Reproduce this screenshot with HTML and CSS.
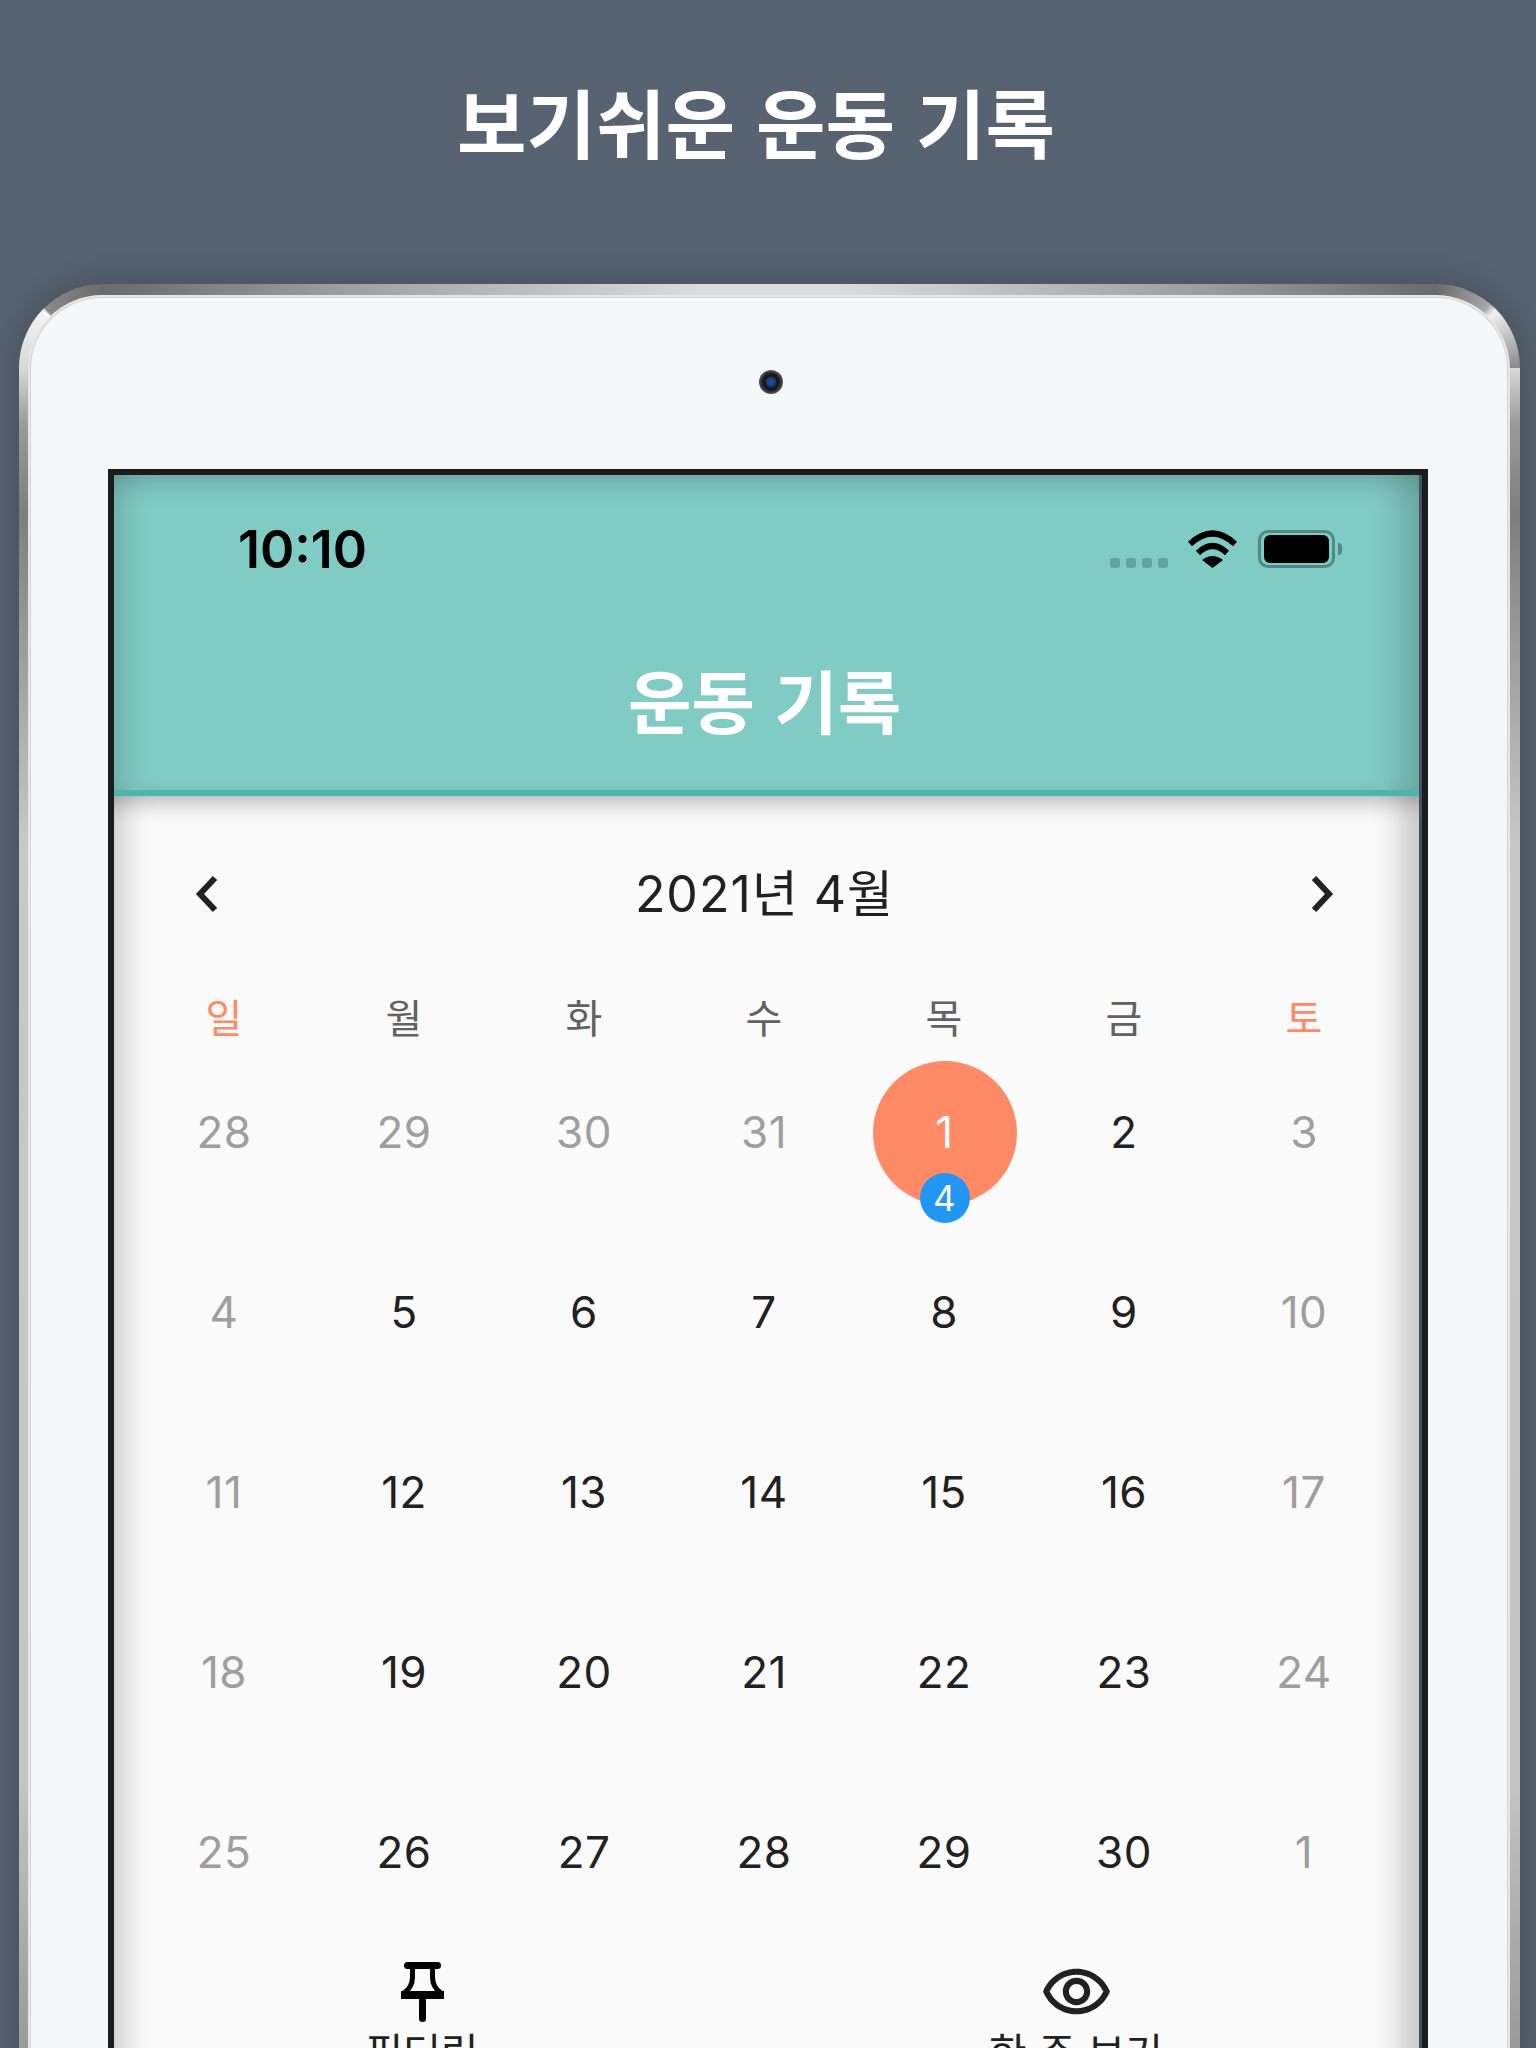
FILE: index.html
```html
<!DOCTYPE html>
<html lang="ko">
<head>
    <meta charset="utf-8">
    <title>보기쉬운 운동 기록</title>
    <link rel="stylesheet" href="styles.css">
</head>
<body>
    <div class="page">
        <h1 class="headline">보기쉬운 운동 기록</h1>
        <div class="device">
            <div class="face">
                <div class="camera"></div>
                <div class="screen">
                    <div class="app">
                        <header class="app-header">
                            <div class="status">
                                <span class="time">10:10</span>
                                <div class="status-icons">
                                    <div class="signal"><i></i><i></i><i></i><i></i></div>
                                    <svg class="wifi" width="51" height="38" viewBox="0 0 51 38">
                                        <path d="M3 14 Q25.5 -7 48 14" fill="none" stroke="#000" stroke-width="6"/>
                                        <path d="M11 23 Q25.5 9 40 23" fill="none" stroke="#000" stroke-width="6"/>
                                        <path d="M25.5 38 L15 30 Q25.5 22 36 30 Z" fill="#000"/>
                                    </svg>
                                    <div class="battery"><div class="battery-fill"></div></div>
                                    <div class="battery-nub"></div>
                                </div>
                            </div>
                            <div class="app-title">운동 기록</div>
                        </header>
                        <main class="calendar">
                            <div class="month-nav">
                                <svg width="24" height="38" viewBox="0 0 24 38">
                                    <polyline points="20,3 5,19 20,35" fill="none" stroke="#212121" stroke-width="6"/>
                                </svg>
                                <span class="month">2021년 4월</span>
                                <svg width="24" height="38" viewBox="0 0 24 38">
                                    <polyline points="4,3 19,19 4,35" fill="none" stroke="#212121" stroke-width="6"/>
                                </svg>
                            </div>
                            <div class="weekdays">
                                <span class="accent">일</span><span>월</span><span>화</span><span>수</span><span>목</span><span>금</span><span class="accent">토</span>
                            </div>
                            <div class="days">
                                <div class="day muted">28</div><div class="day muted">29</div><div class="day muted">30</div><div class="day muted">31</div>
                                <div class="day"><div class="today">1<span class="badge">4</span></div></div>
                                <div class="day">2</div><div class="day muted">3</div>

                                <div class="day muted">4</div><div class="day">5</div><div class="day">6</div><div class="day">7</div><div class="day">8</div><div class="day">9</div><div class="day muted">10</div>
                                <div class="day muted">11</div><div class="day">12</div><div class="day">13</div><div class="day">14</div><div class="day">15</div><div class="day">16</div><div class="day muted">17</div>
                                <div class="day muted">18</div><div class="day">19</div><div class="day">20</div><div class="day">21</div><div class="day">22</div><div class="day">23</div><div class="day muted">24</div>
                                <div class="day muted">25</div><div class="day">26</div><div class="day">27</div><div class="day">28</div><div class="day">29</div><div class="day">30</div><div class="day muted">1</div>
                            </div>
                            <div class="tabs">
                                <div class="tab">
                                    <div class="tab-icon">
                                        <svg width="43" height="60" viewBox="0 0 43 60">
                                            <rect x="3" y="0" width="37" height="7" rx="3.5" fill="#000"/>
                                            <path d="M11.5 6 V15 C11.5 22 9 27 3 31 M31.5 6 V15 C31.5 22 34 27 40 31" fill="none" stroke="#000" stroke-width="5"/>
                                            <rect x="0" y="29" width="43" height="8" fill="#000"/>
                                            <rect x="18" y="35" width="7" height="25" rx="3.5" fill="#000"/>
                                        </svg>
                                    </div>
                                    <span class="tab-label">필터링</span>
                                </div>
                                <div class="tab">
                                    <div class="tab-icon">
                                        <svg width="73" height="73" viewBox="0 0 24 24">
                                            <path fill="#212121" d="M12 6.5c3.79 0 7.17 2.13 8.82 5.5-1.65 3.37-5.02 5.5-8.82 5.5S4.83 15.37 3.18 12C4.83 8.63 8.21 6.5 12 6.5m0-2C7 4.5 2.73 7.61 1 12c1.73 4.39 6 7.5 11 7.5s9.27-3.11 11-7.5c-1.73-4.39-6-7.5-11-7.5zm0 5c1.38 0 2.5 1.12 2.5 2.5s-1.12 2.5-2.5 2.5-2.5-1.12-2.5-2.5 1.12-2.5 2.5-2.5m0-2c-2.48 0-4.5 2.02-4.5 4.5s2.02 4.5 4.5 4.5 4.5-2.02 4.5-4.5-2.02-4.5-4.5-4.5z"/>
                                        </svg>
                                    </div>
                                    <span class="tab-label">한 주 보기</span>
                                </div>
                            </div>
                        </main>
                    </div>
                </div>
            </div>
        </div>
    </div>
</body>
</html>
```

FILE: styles.css
```css
html, body {
    margin: 0;
    padding: 0;
}
body {
    background-color: #576371;
    font-family: Inter, "Noto Sans CJK KR", sans-serif;
}
.page {
    height: 2048px;
    overflow: hidden;
}
.headline {
    height: 284px;
    margin: 0;
    padding-top: 70px;
    padding-right: 24px;
    box-sizing: border-box;
    color: #fff;
    font-family: "Noto Sans CJK KR", sans-serif;
    font-size: 75.5px;
    font-weight: 700;
    line-height: 100px;
    text-align: center;
}

/* tablet shell */
.device {
    margin-left: 19px;
    width: 1501px;
    height: 1800px;
    padding: 13px 12px 0 11px;
    box-sizing: border-box;
    border-radius: 84px 84px 0 0;
    box-shadow: 0 0 40px rgba(0, 0, 0, 0.22);
    background-color: #999;
    background-image:
        conic-gradient(from 270deg at 100% 100%, #d8d8d8 0deg, #f2f2f2 42deg, #fff 44deg, #8a8a8a 46deg, #6a6a6a 90deg),
        conic-gradient(from 0deg at 0% 100%, #6a6a6a 0deg, #a8a8a8 40deg, #d8d8d8 44deg, #f0f0f0 46deg, #8a8a8a 90deg),
        linear-gradient(to right, #6a6a6a 84px, #a0a0a0 330px, #dcdcdc 680px, #dcdcdc 820px, #a0a0a0 1170px, #6a6a6a 1417px),
        linear-gradient(to bottom, #d8d8d8 84px, #9a9a9a 140px, #7e7e7e 230px, #c8c8c8 560px, #c4c4c4 1500px, #9a9a9a 1760px);
    background-size: 84px 84px, 84px 84px, 100% 14px, 100% 100%;
    background-position: left top, right top, left top, left top;
    background-repeat: no-repeat;
}
.face {
    height: 100%;
    box-sizing: border-box;
    display: flex;
    flex-direction: column;
    border: 1px solid #d4d4d4;
    border-bottom: none;
    border-radius: 72px 72px 0 0;
    background-color: #f5f6f8;
    box-shadow: 0 0 0 2px #e6e6e6;
}
.camera {
    width: 24px;
    height: 24px;
    margin: 72px 0 75px 728px;
    border-radius: 50%;
    background: radial-gradient(circle, #1f4fa8 0, #1a3f86 4px, #15171b 6px, #1a1a1a 8px, #55585c 12px);
}
.screen {
    width: 1320px;
    margin-left: 77px;
    flex: 1;
    box-sizing: border-box;
    border: 6px solid #1c1c1c;
    border-bottom: none;
    background-color: #44525f;
}

.app {
    width: 1305px;
    height: 100%;
}
.app-header {
    height: 321px;
    box-sizing: border-box;
    border-bottom: 6px solid #4db6ac;
    background-color: #80cbc4;
    box-shadow: inset 0 22px 24px -14px rgba(0, 0, 0, 0.16), inset 30px 0 30px -20px rgba(0, 0, 0, 0.14), inset -40px 0 30px -20px rgba(0, 0, 0, 0.16);
}
.status {
    height: 148px;
    display: flex;
    align-items: center;
    justify-content: space-between;
    padding-left: 124px;
    padding-right: 77px;
}
.time {
    color: #000;
    font-size: 52px;
    font-weight: 600;
}
.status-icons {
    display: flex;
    align-items: flex-start;
    height: 38px;
    margin-top: 0;
}
.signal {
    display: flex;
    gap: 6px;
    margin-top: 28px;
    margin-right: 19px;
}
.signal i {
    display: block;
    width: 10px;
    height: 10px;
    border-radius: 3px;
    background-color: #63a39d;
}
.wifi {
    margin-right: 20px;
}
.battery {
    width: 77px;
    height: 38px;
    padding: 3px;
    box-sizing: border-box;
    border: 3px solid #4f8a85;
    border-radius: 10px;
}
.battery-fill {
    height: 100%;
    margin: -1px 0;
    padding: 1px 0;
    border-radius: 6px;
    background-color: #000;
}
.battery-nub {
    width: 4px;
    height: 12px;
    margin: 13px 0 0 3px;
    border-radius: 0 6px 6px 0;
    background-color: #4f8a85;
}
.app-title {
    padding-right: 4px;
    color: #fff;
    font-family: "Noto Sans CJK KR", sans-serif;
    font-size: 69px;
    font-weight: 700;
    line-height: 100px;
    text-align: center;
    margin-top: 26px;
}

/* calendar */
.calendar {
    height: 1260px;
    background-color: #fafafa;
    box-shadow: inset 0 28px 22px -22px rgba(0, 0, 0, 0.28), inset 36px 0 30px -26px rgba(0, 0, 0, 0.2), inset -44px 0 30px -26px rgba(0, 0, 0, 0.2);
}
.month-nav {
    height: 100px;
    margin: 0 20px;
    padding: 48px 65px 0 61px;
    display: flex;
    align-items: center;
    justify-content: space-between;
}
.month {
    color: #212121;
    font-size: 50px;
    font-weight: 380;
    letter-spacing: 1px;
    line-height: 60px;
}
.weekdays {
    height: 55px;
    margin: 0 20px;
    padding-top: 43px;
    display: grid;
    grid-template-columns: repeat(7, 180px);
    align-items: center;
    color: #616161;
    font-size: 40px;
    text-align: center;
}
.weekdays .accent {
    color: #ff8a65;
}
.days {
    margin: 0 20px;
    display: grid;
    grid-template-columns: repeat(7, 180px);
    grid-auto-rows: 180px;
}
.day {
    display: flex;
    align-items: center;
    justify-content: center;
    color: #212121;
    font-size: 44px;
    font-weight: 380;
    letter-spacing: 0.5px;
}
.day.muted {
    color: #9e9e9e;
}
.today {
    position: relative;
    width: 144px;
    height: 144px;
    margin: 2px 0 0 1px;
    padding-bottom: 2px;
    box-sizing: border-box;
    display: flex;
    align-items: center;
    justify-content: center;
    border-radius: 50%;
    background-color: #ff8a65;
    color: #fff;
}
.badge {
    position: absolute;
    left: 47px;
    bottom: -18px;
    width: 50px;
    height: 50px;
    display: flex;
    align-items: center;
    justify-content: center;
    border-radius: 50%;
    background-color: #2196f3;
    color: #fff;
    font-size: 35px;
}
.tabs {
    display: grid;
    grid-template-columns: 616px 692px;
    padding-top: 13px;
}
.tab {
    display: flex;
    flex-direction: column;
    align-items: center;
}
.tab-icon {
    height: 73px;
    display: flex;
    align-items: center;
    justify-content: center;
}
.tab-label {
    color: #212121;
    font-size: 41px;
    line-height: 50px;
}
```
